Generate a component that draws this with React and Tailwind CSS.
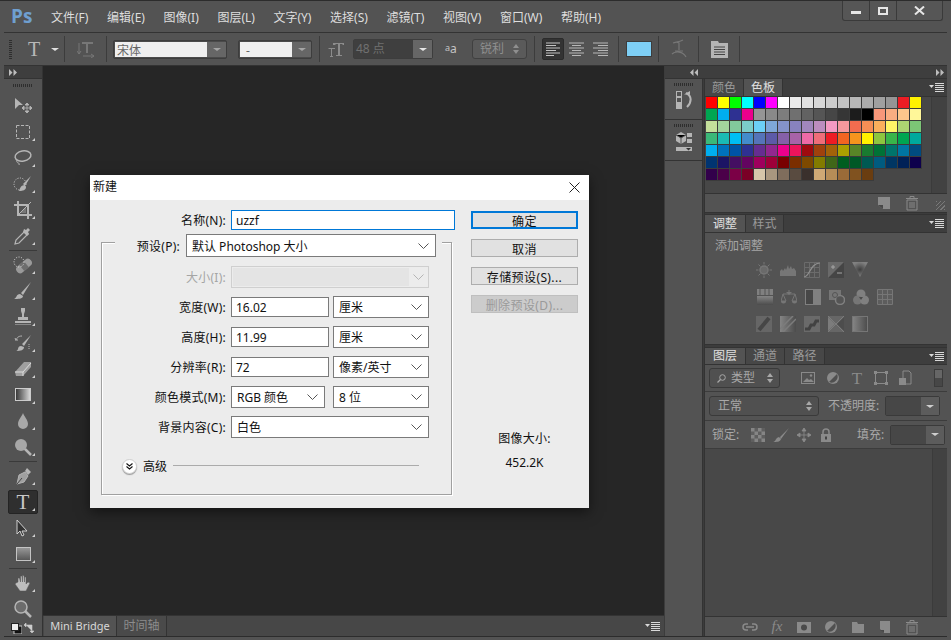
import React from "react";

const F = "font-['Noto_Sans','Noto_Sans_CJK_SC',sans-serif]";

const Ic = ({ s = 20, c = "", children, vb }) => (
  <svg width={s} height={s} viewBox={vb || `0 0 ${s} ${s}`} className={"shrink-0 " + c} fill="none">{children}</svg>
);

const ToolBtn = ({ children, active, corner = true, h = "h-[26px]" }) => (
  <div className={`relative ${h} flex items-center justify-center`}>
    {active && <div className="absolute left-[4px] right-[4px] top-[1px] bottom-[1px] bg-[#2f2f2f] border border-[#242424] rounded-[2px]" />}
    <div className="relative">{children}</div>
    {corner && <div className="absolute right-[7px] bottom-[4px] w-0 h-0 border-l-[3px] border-l-transparent border-b-[3px] border-b-[#d0d0d0]" />}
  </div>
);
const ToolSep = () => <div className="h-px bg-[#3a3a3a] mx-[5px] my-[1px]" />;

const G = "#b5b5b5";
const tools1 = [
  <Ic key="a"><path d="M2 2v11l4-4 4 0z" fill={G} /><path d="M14 7v10M9 12h10M14 7l-2 2h4zM14 17l-2-2h4zM9 12l2-2v4zM19 12l-2-2v4z" stroke={G} fill={G} strokeWidth=".8" /></Ic>,
  <Ic key="b"><rect x="3.5" y="3.5" width="13" height="13" stroke={G} strokeDasharray="3 1.5" /></Ic>,
  <Ic key="c"><ellipse cx="10" cy="8" rx="8" ry="5" stroke={G} strokeWidth="1.5" transform="rotate(-10 10 8)" /><path d="M4 12c-1 2 1 3 1 3s2 0 1 2" stroke={G} /></Ic>,
  <Ic key="d"><circle cx="7" cy="10" r="6" stroke="#d0d0d0" strokeDasharray="1 1.5" /><path d="M18 2l-8 8 2 2zM6 17c1-2 1-5 5-6l2 2c0 3-3 4-7 4z" fill={G} /></Ic>,
  <Ic key="e"><path d="M5 1v14h14M1 5h14v14" stroke={G} strokeWidth="2" /><path d="M7 13l6-6v6z" fill="#777" /><path d="M5 15L18 2" stroke={G} /></Ic>,
  <Ic key="f"><path d="M2 18l1-4 9-9 3 3-9 9z" stroke={G} strokeWidth="1.2" /><path d="M10 6l4 4 2-2-1-2 2-2-2-2-2 2-2-1z" fill={G} /></Ic>,
];
const tools2 = [
  <Ic key="a"><g transform="rotate(-40 11 11)"><rect x="2" y="7" width="18" height="8" rx="4" fill="#9a9a9a" /><rect x="8" y="7" width="6" height="8" fill="#6d6d6d" /></g><circle cx="6" cy="7" r="5" stroke="#ddd" strokeDasharray="1 1.5" /></Ic>,
  <Ic key="b"><path d="M18 1L8 12l2 2z" fill={G} /><path d="M1 18c3-1 2-5 6-5l3 2c0 3-5 3-9 3z" fill={G} /></Ic>,
  <Ic key="c"><path d="M8 1h4v3l-1 3v3h4v3H5v-3h4V7L8 4z" fill={G} /><rect x="2" y="14" width="16" height="2" fill={G} /><rect x="2" y="17" width="16" height="1" fill="#888" /></Ic>,
  <Ic key="d"><path d="M18 2L9 11l2 2zM3 18c3 0 1-5 5-5l3 1c0 3-3 4-8 4z" fill={G} /><path d="M9 3C5 3 4 5 3 7l-1-2M2 7l3 0" stroke={G} /><path d="M16 11v6" stroke={G} strokeDasharray="1 1" /></Ic>,
  <Ic key="e"><path d="M2 13L11 3h7v5l-8 9H3z" fill="#9f9f9f" /><path d="M2 13h8v4M10 13l8-9" stroke="#dcdcdc" /></Ic>,
  <Ic key="f"><defs><linearGradient id="gr"><stop stopColor="#333" /><stop offset="1" stopColor="#ddd" /></linearGradient></defs><rect x="2.5" y="3.5" width="15" height="12" fill="url(#gr)" stroke="#ccc" /></Ic>,
  <Ic key="g"><path d="M10 2c1 3 5 7 5 11a5 5 0 0 1-10 0c0-4 4-8 5-11z" fill="#a8a8a8" /></Ic>,
  <Ic key="h"><circle cx="8" cy="8" r="6" fill="#a8a8a8" /><path d="M12 12l6 6" stroke={G} strokeWidth="2.5" /></Ic>,
];
const tools3 = [
  <Ic key="a"><path d="M4 18l2-9 6-3 3 4-4 6z" fill="#a0a0a0" stroke={G} /><path d="M12 5l2-3 4 4-3 3z" fill={G} /><path d="M4 18l5-6" stroke="#444" /></Ic>,
];
const tools4 = [
  <Ic key="a"><path d="M4 2v14l3-3 2 5 2-1-2-4h5z" fill="#333" stroke="#cfcfcf" /></Ic>,
  <Ic key="b"><defs><linearGradient id="gs" x2="0" y2="1"><stop stopColor="#999" /><stop offset="1" stopColor="#555" /></linearGradient></defs><rect x="3.5" y="3.5" width="14" height="13" fill="url(#gs)" stroke="#c4c4c4" /></Ic>,
];
const tools5 = [
  <Ic key="a"><path d="M5 9V5h1.5l1 4V3h1.5l.5 6V2.5H11l.5 6.5V4H13v7l2-2 2 1-4 8H7L2 11l1-1z" fill="#bdbdbd" stroke="#555" strokeWidth=".5" /></Ic>,
  <Ic key="b"><circle cx="8" cy="8" r="6" fill="#6c6c6c" stroke={G} strokeWidth="1.5" /><path d="M12 12l6 6" stroke={G} strokeWidth="2.5" /></Ic>,
];

const Sep = () => <div className="w-px h-[26px] bg-[#3c3c3c] shrink-0" />;
const Caret = ({ c = "border-t-[#d0d0d0]" }) => <div className={`w-0 h-0 border-x-[4px] border-x-transparent border-t-[3px] ${c}`} />;
const Menu = () => (
  <svg width="15" height="9" viewBox="0 0 15 9" className="shrink-0">
    <path d="M0 2h5L2.500 5z" fill="#d8d8d8" />
    <path d="M6 .5h9M6 2.500h9M6 4.500h9M6 6.500h9M6 8.500h9" stroke="#d8d8d8" />
  </svg>
);
const Collapse = ({ dir = "r" }) => (
  <svg width="8" height="7" viewBox="0 0 8 7">
    {dir === "r" ? <path d="M0 0l3.500 3.500L0 7zM4.500 0L8 3.500 4.500 7z" fill="#bdbdbd" /> : <path d="M3.500 0L0 3.500 3.500 7zM8 0L4.500 3.500 8 7z" fill="#bdbdbd" />}
  </svg>
);
const Grip = ({ w = "w-[20px]" }) => <div className={`${w} h-[3px] bg-[repeating-linear-gradient(90deg,#2e2e2e_0_1px,transparent_1px_2px)]`} />;

const DlgSel = ({ w, children, h = "h-[22px]" }) => (
  <div className={`${w} ${h} shrink-0 bg-white border border-[#7a7a7a] flex items-center pl-[5px] pr-[6px] justify-between text-[#111]`}>
    <span className="whitespace-pre pt-[2px]">{children}</span>
    <svg width="11" height="6" viewBox="0 0 11 6"><path d="M.5.5l5 5 5-5" stroke="#555" fill="none" /></svg>
  </div>
);
const DlgInput = ({ w, children }) => (
  <div className={`${w} h-[20px] shrink-0 bg-white border border-[#7a7a7a] flex items-center pl-[4px] pt-[2px] text-[#111]`}>{children}</div>
);
const Row = ({ label, children, dim }) => (
  <div className="flex items-center h-[22px] mt-[8px]">
    <div className={`w-[124px] pt-[2px] text-right tracking-[0.25px] ${dim ? "text-[#a5a5a5]" : "text-[#111]"}`}>{label}</div>
    <div className="flex ml-[5px] items-center">{children}</div>
  </div>
);
const DlgBtn = ({ children, cls = "border border-[#adadad] bg-[#e1e1e1] text-[#111]" }) => (
  <div className={`h-[18px] flex items-center justify-center leading-none pt-[3px] tracking-[0.4px] ${cls}`}>{children}</div>
);

const sw = [
  ["ff0000","ffff00","00ff00","00ffff","0000ff","ff00ff","ffffff","ebebeb","e1e1e1","d7d7d7","cccccc","c2c2c2","b7b7b7","acacac","a0a0a0","959595","ed1c24","fff200"],
  ["00a651","00aeef","2e3192","ec008c","959595","898989","7d7d7d","707070","626262","555555","464646","363636","1c1c1c","000000","f7977a","f9ad81","fdc68c","fff799"],
  ["c4df9b","a3d39c","82ca9c","7bcdc9","6ccff6","7ea7d8","8493ca","8882be","a187be","bc8dbf","f49ac2","f6989d","f26c4f","f68e55","fbaf5c","fff467","acd372","7cc576"],
  ["3bb878","1abbb4","00bff3","438ccb","5574b9","5c5aa8","8560a8","a863a8","ee6aa7","ef6d79","ed1c24","f26522","f7941d","fff200","8dc63f","39b54a","00a651","00a99d"],
  ["00aeef","0072bc","0054a6","2e3192","662d91","92278f","ec008c","ed145b","9e0b0f","a0410d","a36209","aba000","598527","197b30","007236","00746b","0076a3","004b80"],
  ["003471","1b1464","440e62","630460","9e005d","9e0039","790000","7b2e00","7d4900","827b00","406618","005e20","005826","005952","005b7f","003663","002157","0d004c"],
  ["32004b","4b0049","7b0046","7a0026","d6c6aa","a9977f","7f6d5c","594b40","3a302c","cfa975","b68d57","9a6b38","80521f","6a3d10"],
];

const A = "#767676";
const grad = (id, dir) => (
  <defs><linearGradient id={id} x2={dir ? "0" : "1"} y2={dir ? "1" : "0"}><stop stopColor="#858585" /><stop offset="1" stopColor="#4c4c4c" /></linearGradient></defs>
);
const adjRows = [
  [
    <><circle cx="8" cy="8" r="4" stroke={A} strokeWidth="1.500" fill="#6a6a6a" /><path d="M8 0v2.500M8 13.500V16M0 8h2.500M13.500 8H16M2.500 2.500l2 2M11.500 11.500l2 2M2.500 13.500l2-2M11.500 4.500l2-2" stroke={A} /></>,
    <path d="M0 14V9l2-2 1 2 2-3 1 2 2-5 1 4 2-3 1 3 2-1 2 3v5z" fill={A} />,
    <><path d="M.5.5h15v15H.5zM5.500.5v15M10.500.5v15M.5 5.500h15M.5 10.500h15" stroke="#6b6b6b" /><path d="M0 15c6 0 6-14 16-14" stroke="#8f8f8f" strokeWidth="1.200" /></>,
    <><rect width="16" height="16" fill="#6a6a6a" /><path d="M0 16L16 0v16z" fill="#454545" /><path d="M3 5h4M5 3v4M9 11h5" stroke="#a5a5a5" /></>,
    <><defs><radialGradient id="tri"><stop stopColor="#3f3f3f" /><stop offset="1" stopColor="#808080" /></radialGradient></defs><path d="M0 0h16L8 15z" fill="url(#tri)" /></>,
  ],
  [
    <>{grad("a1", 1)}<rect width="16" height="6" fill="#808080" /><path d="M3 0v6M8 0v6M12 0v6" stroke="#555" /><rect y="7" width="16" height="9" fill="url(#a1)" /></>,
    <><path d="M8 1v3M2 5h12M2 5L0 12h5zM14 5l-3 7h5z" stroke={A} /><path d="M0 12a2.500 2.500 0 0 0 5 0zM11 12a2.500 2.500 0 0 0 5 0zM5 3h6L8 6z" fill={A} /></>,
    <><rect x=".5" y=".5" width="15" height="15" fill="#808080" stroke="#808080" /><rect x="1" y="1" width="7" height="14" fill="#474747" /></>,
    <><rect y="1" width="12" height="10" fill={A} /><circle cx="11" cy="11" r="4.500" stroke="#808080" strokeWidth="1.500" fill="#555" /><circle cx="6" cy="6" r="2.500" stroke="#555" /></>,
    <><circle cx="8" cy="5" r="4.500" fill="#808080" /><circle cx="4.500" cy="11" r="4.500" fill={A} /><circle cx="11.500" cy="11" r="4.500" fill="#808080" /><path d="M6 8h4l-2 3z" fill="#4b4b4b" /></>,
    <path d="M.5.5h15v15H.5zM5.500.5v15M10.500.5v15M.5 5.500h15M.5 10.500h15" stroke={A} fill="#5d5d5d" />,
  ],
  [
    <><rect width="16" height="16" fill="#666" /><path d="M3 14L13 2" stroke="#464646" strokeWidth="4" /></>,
    <>{grad("a2")}<rect width="16" height="16" fill="url(#a2)" /><path d="M0 13L13 0M3 16L16 3" stroke="#7c7c7c" strokeWidth="1.500" /></>,
    <><rect width="16" height="16" fill="#6a6a6a" /><path d="M1 13h4l2-4h3l2-4h3" stroke="#424242" strokeWidth="3" /></>,
    <><rect width="16" height="16" fill="#666" /><path d="M0 0l8 8 8-8M0 16l8-8 8 8" stroke="#7c7c7c" /><path d="M0 1l7 7-7 7z" fill="#7c7c7c" /><path d="M16 1L9 8l7 7z" fill="#4d4d4d" /></>,
    <>{grad("a3")}<rect x=".5" y=".5" width="15" height="15" fill="url(#a3)" stroke={A} /></>,
  ],
];

const DkSel = ({ w, children }) => (
  <div className={`${w} h-[20px] rounded-[3px] bg-[#505050] border border-[#3a3a3a] flex items-center justify-between px-[6px] text-[#a8a8a8] shrink-0`}>
    {children}
    <svg width="6" height="10" viewBox="0 0 6 10"><path d="M0 4l3-4 3 4zM0 6l3 4 3-4z" fill="#a8a8a8" /></svg>
  </div>
);
const DkNum = () => (
  <div className="w-[55px] h-[20px] flex border border-[#3a3a3a] rounded-[2px] shrink-0">
    <div className="w-[35px] bg-[#474747]" />
    <div className="flex-1 bg-[#5c5c5c] flex items-center justify-center"><Caret c="border-t-[#cfcfcf]" /></div>
  </div>
);
const B = "#8a8a8a";

const foot = [
  <Ic key="1" s={16}><path d="M6 5H4a3 3 0 0 0 0 6h2M10 5h2a3 3 0 0 1 0 6h-2M4 8h8" stroke={B} strokeWidth="1.500" /></Ic>,
  <span key="2" className="w-[16px] text-center italic font-['Liberation_Serif',serif] text-[15px] leading-none text-[#8a8a8a]">fx</span>,
  <Ic key="3" s={16}><rect x="1" y="3" width="14" height="11" fill={B} /><circle cx="8" cy="8.500" r="3" fill="#4a4a4a" /></Ic>,
  <Ic key="4" s={16}><circle cx="8" cy="8" r="6" fill={B} /><path d="M12 4L4 12a6 6 0 0 0 8-8z" fill="#505050" /></Ic>,
  <Ic key="5" s={16}><path d="M2 3h5l1 2h6v9H2z" fill={B} /></Ic>,
  <Ic key="6" s={16}><path d="M3 2h10v12H7l-4-4z" fill={B} /><path d="M3 11h4v3" fill="#484848" /></Ic>,
  <Ic key="7" s={16}><path d="M3 5h10v10H3zM2 3.500h12M6 3V1.500h4V3M6 7v6M8 7v6M10 7v6" stroke={B} /></Ic>,
];

export default function App() {
  return (
    <div className={`relative w-[951px] h-[640px] overflow-hidden bg-[#535353] text-[12px] leading-[16px] ${F} flex flex-col`}>
      {/* Title bar */}
      <div className="h-[32px] shrink-0 flex items-center relative border-t border-[#2c2c2c]">
        <span className="ml-[11px] w-[40px] text-[#6f9fd0] text-[19px] font-bold leading-none font-['Open_Sans',sans-serif]">Ps</span>
        <div className="flex gap-[18.6px] text-[#dedede] text-[12px] mt-[2px]">
          {["文件(F)", "编辑(E)", "图像(I)", "图层(L)", "文字(Y)", "选择(S)", "滤镜(T)", "视图(V)", "窗口(W)", "帮助(H)"].map((m) => (
            <span key={m} className="whitespace-nowrap">{m}</span>
          ))}
        </div>
        <div className="absolute right-[8px] top-0 h-[20px] w-[101px] flex border border-t-0 border-[#3a3a3a] rounded-b-[3px] bg-[#565656]">
          <div className="w-[27px] border-r border-[#3a3a3a] flex items-center justify-center pt-[4px]"><div className="w-[10px] h-[3px] bg-[#e6e6e6]" /></div>
          <div className="w-[27px] border-r border-[#3a3a3a] flex items-center justify-center"><div className="w-[10px] h-[8px] border-2 border-[#e6e6e6]" /></div>
          <div className="flex-1 flex items-center justify-center">
            <svg width="11" height="9" viewBox="0 0 11 9"><path d="M1 .5l9 8M10 .5l-9 8" stroke="#e6e6e6" strokeWidth="2" /></svg>
          </div>
        </div>
      </div>

      {/* Options bar */}
      <div className="h-[34px] shrink-0 mx-[4px] border-t border-b border-[#333] bg-[#535353] flex items-center text-[#a8a8a8] relative">
        <div className="ml-[5px] w-[3px] h-[20px] bg-[repeating-linear-gradient(0deg,#2e2e2e_0_1px,transparent_1px_2px)]" />
        <span className="ml-[16px] w-[15px] text-[20px] leading-none font-['Liberation_Serif',serif] text-[#b8b8b8]">T</span>
        <div className="ml-[8px]"><Caret c="border-t-[#e0e0e0]" /></div>
        <div className="ml-[5px]"><Sep /></div>
        <div className="ml-[12px] w-[18px]">
          <Ic s={18}><path d="M5 2h11v2H11v9H9V4H5z" fill="#777" /><path d="M2 3v11M0 11l2 3 2-3M6 16h11M14 14l3 2-3 2" stroke="#777" /></Ic>
        </div>
        <div className="ml-[11px]"><Sep /></div>
        <div className="ml-[6px] w-[114px] h-[19px] flex bg-[#4a4a4a] border border-[#3d3d3d] rounded-[2px] p-[1px] pr-0">
          <div className="w-[92px] bg-[#efefef] text-[#666] pl-[2px] leading-[17px]">宋体</div>
          <div className="flex-1 bg-[#666] flex items-center justify-center"><Caret c="border-t-[#a5a5a5]" /></div>
        </div>
        <div className="ml-[11px] w-[74px] h-[19px] flex bg-[#4a4a4a] border border-[#3d3d3d] rounded-[2px] p-[1px] pr-0">
          <div className="w-[52px] bg-[#efefef] text-[#666] pl-[6px] leading-[17px]">-</div>
          <div className="flex-1 bg-[#666] flex items-center justify-center"><Caret c="border-t-[#a5a5a5]" /></div>
        </div>
        <div className="ml-[7px]"><Sep /></div>
        <div className="ml-[7px] w-[18px]">
          <Ic s={18}><path d="M6 3h11v2h-1l-1-1h-2v11h2v1H9v-1h2V4H9L8 5H6z" fill="#8c8c8c" /><path d="M1 8h7v1H5v7h1v1H3v-1h1V9H2z" fill="#8c8c8c" /></Ic>
        </div>
        <div className="ml-[8px] w-[80px] h-[20px] flex border border-[#3d3d3d] rounded-[2px]">
          <div className="w-[59px] bg-[#3f3f3f] text-[#707070] pl-[2px] leading-[18px]">48 点</div>
          <div className="flex-1 bg-[#666] flex items-center justify-center"><Caret c="border-t-[#e6e6e6]" /></div>
        </div>
        <span className="ml-[12px] w-[14px] flex items-end leading-none text-[#c4c4c4]"><span className="text-[9px] -mt-[4px] mb-[3px]">a</span><span className="text-[12px]">a</span></span>
        <div className="ml-[13px] w-[55px] h-[20px] rounded-[3px] bg-[#5a5a5a] border border-[#404040] flex items-center justify-between px-[7px] text-[#8f8f8f]">
          锐利
          <svg width="6" height="10" viewBox="0 0 6 10"><path d="M0 4l3-4 3 4zM0 6l3 4 3-4z" fill="#8f8f8f" /></svg>
        </div>
        <div className="ml-[7px]"><Sep /></div>
        <div className="ml-[7px] w-[22px] h-[22px] bg-[#333] border border-[#2b2b2b] rounded-[2px] flex items-center justify-center">
          <svg width="14" height="14" viewBox="0 0 14 14"><path d="M0 1h14M0 3.500h10M0 6h14M0 8.500h10M0 11h14M0 13.500h8" stroke="#c4c4c4" /></svg>
        </div>
        <div className="ml-[5px]">
          <svg width="15" height="14" viewBox="0 0 15 14"><path d="M0 1h15M3 3.500h9M0 6h15M3 8.500h9M0 11h15M3 13.500h9" stroke="#b8b8b8" /></svg>
        </div>
        <div className="ml-[9px]">
          <svg width="15" height="14" viewBox="0 0 15 14"><path d="M0 1h15M5 3.500h10M0 6h15M5 8.500h10M0 11h15M5 13.500h10" stroke="#b8b8b8" /></svg>
        </div>
        <div className="ml-[10px]"><Sep /></div>
        <div className="ml-[7px] w-[26px] h-[16px] bg-[#7ecff5] border border-[#3d3d3d]" />
        <div className="ml-[6px]"><Sep /></div>
        <div className="ml-[12px]">
          <svg width="16" height="20" viewBox="0 0 16 20"><path d="M2 4c3-1 6-1 10-3M5 3l3 1v7M1 15c3-3 11-3 14 3M4 12h8" stroke="#777" strokeWidth="1.200" fill="none" /></svg>
        </div>
        <div className="ml-[11px]"><Sep /></div>
        <div className="ml-[12px]">
          <svg width="17" height="17" viewBox="0 0 17 17"><path d="M0 0h7l1 2h9v15H0z" fill="#b5b5b5" /><path d="M3 6h11M3 8.500h11M3 11h11M3 13.500h11" stroke="#444" /></svg>
        </div>
        <div className="ml-[11px]"><Sep /></div>
      </div>

      {/* Main */}
      <div className="flex-1 flex mx-[4px] min-h-0 border-b border-[#2c2c2c] bg-[#3c3c3c]">
        {/* Tools */}
        <div className="w-[39px] shrink-0 flex flex-col border-r border-[#333]">
          <div className="h-[13px] shrink-0 bg-[#3e3e3e] border-b border-[#333] pl-[5px] flex items-center"><Collapse /></div>
          <div className="flex-1 bg-[#535353] flex flex-col">
            <div className="h-[11px] flex items-center justify-center mt-px"><Grip /></div>
            <div className="mt-[2px]">
              <ToolBtn corner={false}>{tools1[0]}</ToolBtn>
              {tools1.slice(1).map((t, i) => <ToolBtn key={i}>{t}</ToolBtn>)}
            </div>
            <ToolSep />
            {tools2.map((t, i) => <ToolBtn key={i}>{t}</ToolBtn>)}
            <ToolSep />
            {tools3.map((t, i) => <ToolBtn key={i}>{t}</ToolBtn>)}
            <ToolBtn active><span className="text-[21px] leading-none font-['Liberation_Serif',serif] text-[#c8c8c8]">T</span></ToolBtn>
            {tools4.map((t, i) => <ToolBtn key={i}>{t}</ToolBtn>)}
            <ToolSep />
            <ToolBtn>{tools5[0]}</ToolBtn>
            <ToolBtn corner={false}>{tools5[1]}</ToolBtn>
            <div className="flex justify-between items-center px-[7px] -mt-px h-[14px]">
              <svg width="11" height="11" viewBox="0 0 11 11"><rect x="3" y="3" width="8" height="8" fill="#111" stroke="#ccc" /><rect x=".5" y=".5" width="7" height="7" fill="#eee" stroke="#222" /></svg>
              <svg width="11" height="11" viewBox="0 0 11 11"><path d="M2 2h6v6M0 2l2-2v4zM8 10L6 8h4z" stroke="#ccc" fill="#ccc" strokeWidth=".6" /></svg>
            </div>
          </div>
        </div>

        {/* Canvas */}
        <div className="w-[621px] shrink-0 flex flex-col">
          <div className="flex-1 bg-[#262626]" />
          <div className="h-[21px] shrink-0 bg-[#474747] border-t border-[#333] flex items-end pl-px">
            <div className="w-[73px] h-full bg-[#535353] text-[#d8d8d8] text-[11px] flex items-center justify-center border-r border-[#333]">Mini Bridge</div>
            <div className="w-[50px] h-full bg-[#4a4a4a] text-[#8c8c8c] flex items-center justify-center border-r border-[#333]">时间轴</div>
            <div className="flex-1 h-full flex items-center justify-end pr-[4px]"><Menu /></div>
          </div>
        </div>

        {/* Right area */}
        <div className="flex-1 flex flex-col ml-[1px] min-w-0">
          <div className="h-[13px] shrink-0 bg-[#3e3e3e] border-b border-[#333] flex items-center justify-between px-[25px] pr-[3px]">
            <Collapse dir="l" /><Collapse />
          </div>
          <div className="flex-1 flex min-h-0">
            {/* Dock */}
            <div className="w-[38px] shrink-0 flex flex-col bg-[#535353] border-r border-[#333]">
              <div className="h-[41px] border-b border-[#333] flex flex-col items-center pt-[4px]">
                <Grip />
                <svg className="mt-[5px]" width="16" height="18" viewBox="0 0 16 18"><rect x=".5" y=".5" width="5" height="5" stroke="#b5b5b5" fill="none" /><rect x=".5" y="6.500" width="5" height="5" stroke="#b5b5b5" fill="none" /><rect x="0" y="12" width="6" height="6" fill="#b5b5b5" /><path d="M10 2c6 3 6 9 1 14" stroke="#b5b5b5" strokeWidth="2" fill="none" /><path d="M8 3.500h6V0z" fill="#b5b5b5" /></svg>
              </div>
              <div className="h-[41px] border-b border-[#333] flex flex-col items-center pt-[4px]">
                <Grip />
                <svg className="mt-[5px]" width="16" height="20" viewBox="0 0 16 20"><path d="M0 3l5-3 5 3v6l-5 3-5-3z" fill="#b5b5b5" /><path d="M0 3l5 3 5-3M5 6v6" stroke="#555" /><rect x="11" y="1" width="5" height="4" fill="#b5b5b5" /><rect x="11" y="7" width="5" height="4" fill="#b5b5b5" /><rect y="15" width="16" height="4" fill="#b5b5b5" /><path d="M10 16h5l-2.500 2.500z" fill="#333" /></svg>
              </div>
            </div>

            {/* Panels */}
            <div className="flex-1 ml-px flex flex-col min-w-0 border-l border-[#333]">
              {/* Swatches */}
              <div className="h-[134px] shrink-0 flex flex-col bg-[#535353] border-b border-[#333]">
                <div className="h-[18px] bg-[#3e3e3e] border-b border-[#333] flex shrink-0 pr-[3px]">
                  <div className="w-[39px] flex items-center justify-center bg-[#474747] text-[#999] border-r border-[#333]">颜色</div>
                  <div className="w-[39px] flex items-center justify-center bg-[#535353] text-[#e0e0e0] border-r border-[#333]">色板</div>
                  <div className="flex-1 flex justify-end items-center"><Menu /></div>
                </div>
                <div className="flex-1 flex bg-[#474747] border-b border-[#333] min-h-0">
                  <div className="flex-1 pl-px">
                    <div className="grid grid-cols-[repeat(18,12px)]">
                      {sw.flat().map((c, i) => (
                        <div key={i} className="w-[12px] h-[12px] border-r border-b border-[#3b3b3b]" style={{ backgroundColor: "#" + c }} />
                      ))}
                    </div>
                  </div>
                  <div className="w-[16px] bg-[#424242] border-l border-[#3b3b3b]" />
                </div>
                <div className="h-[18px] shrink-0 flex items-center justify-end pr-[27px] gap-[12px] relative">
                  <Ic s={16}><path d="M2 2h12v12H7l-5-4z" fill="#8a8a8a" /><path d="M2 10h5v4" fill="#484848" /></Ic>
                  <Ic s={16}><path d="M3 5h10v10H3zM2 3.500h12M6 3V1.500h4V3M6 7v6M8 7v6M10 7v6" stroke="#8a8a8a" /></Ic>
                  <div className="absolute right-[2px] bottom-[2px] w-[9px] h-[9px] bg-[repeating-linear-gradient(135deg,#7a7a7a_0_1px,transparent_1px_3px)]" />
                </div>
              </div>
              <div className="h-[1px] shrink-0" />
              {/* Adjustments */}
              <div className="h-[131px] shrink-0 flex flex-col bg-[#535353] border-y border-[#333]">
                <div className="h-[18px] bg-[#3e3e3e] border-b border-[#333] flex shrink-0 pr-[3px]">
                  <div className="w-[41px] flex items-center justify-center bg-[#535353] text-[#e0e0e0] border-r border-[#333]">调整</div>
                  <div className="w-[38px] flex items-center justify-center bg-[#474747] text-[#999] border-r border-[#333]">样式</div>
                  <div className="flex-1 flex justify-end items-center"><Menu /></div>
                </div>
                <div className="pl-[10px] pt-[5px] text-[#a5a5a5] h-[26px]">添加调整</div>
                <div className="flex flex-col gap-[11px] mt-[3px] pr-[2px]">
                  {adjRows.map((r, i) => (
                    <div key={i} className={`flex justify-center gap-[8px] ${i === 1 ? "" : "pr-[26px]"}`}>
                      {r.map((d, j) => <Ic key={j} s={16}>{d}</Ic>)}
                    </div>
                  ))}
                </div>
              </div>
              <div className="h-[2px] shrink-0" />
              {/* Layers */}
              <div className="flex-1 min-h-0 flex flex-col bg-[#535353] border-t border-[#333]">
                <div className="h-[17px] bg-[#3e3e3e] border-b border-[#333] flex shrink-0 pr-[3px]">
                  <div className="w-[41px] flex items-center justify-center bg-[#535353] text-[#e0e0e0] border-r border-[#333]">图层</div>
                  <div className="w-[39px] flex items-center justify-center bg-[#474747] text-[#999] border-r border-[#333]">通道</div>
                  <div className="w-[40px] flex items-center justify-center bg-[#474747] text-[#999] border-r border-[#333]">路径</div>
                  <div className="flex-1 flex justify-end items-center"><Menu /></div>
                </div>
                <div className="h-[27px] shrink-0 flex items-center border-b border-[#3c3c3c] pl-[4px]">
                  <div className="w-[71px] h-[20px] rounded-[3px] bg-[#505050] border border-[#3a3a3a] flex items-center justify-between pl-[7px] pr-[6px] text-[#a8a8a8]">
                    <span className="flex items-center gap-[5px]">
                      <svg width="9" height="9" viewBox="0 0 9 9"><circle cx="5.500" cy="3.500" r="2.800" stroke="#a8a8a8" fill="none" /><path d="M3.500 5.500L.5 8.500" stroke="#a8a8a8" strokeWidth="1.300" /></svg>
                      类型
                    </span>
                    <svg width="6" height="10" viewBox="0 0 6 10"><path d="M0 4l3-4 3 4zM0 6l3 4 3-4z" fill="#a8a8a8" /></svg>
                  </div>
                  <div className="flex items-center gap-[8px] ml-[21px]">
                    <Ic s={16}><rect x=".5" y="2.500" width="13" height="11" stroke={B} /><path d="M2 12l4-4 2 2 2-1 3 3z" fill={B} /><circle cx="10" cy="5.500" r="1.200" fill={B} /></Ic>
                    <Ic s={16}><circle cx="8" cy="8" r="6" fill={B} /><path d="M12 4L4 12a6 6 0 0 0 8-8z" fill="#505050" /></Ic>
                    <span className="w-[16px] text-center text-[17px] leading-none font-['Liberation_Serif',serif] text-[#8a8a8a]">T</span>
                    <Ic s={16}><rect x="2.500" y="2.500" width="11" height="11" stroke={B} /><path d="M1 1h3v3H1zM12 1h3v3h-3zM1 12h3v3H1zM12 12h3v3h-3z" fill={B} /></Ic>
                    <Ic s={16}><path d="M6 1h6l2 2v11H6z" stroke={B} /><rect x="2" y="8" width="7" height="7" fill={B} /></Ic>
                  </div>
                  <div className="ml-auto mr-[4px] w-[9px] h-[18px] border border-[#3c3c3c] bg-[#474747]"><div className="h-[8px] bg-[#666]" /></div>
                </div>
                <div className="h-[29px] shrink-0 flex items-center border-b border-[#3c3c3c] pl-[4px]">
                  <DkSel w="w-[110px]"><span className="ml-[2px]">正常</span></DkSel>
                  <span className="ml-[9px] w-[57px] text-[#a8a8a8] whitespace-nowrap">不透明度:</span>
                  <DkNum />
                </div>
                <div className="h-[28px] shrink-0 flex items-center border-b border-[#3c3c3c] pl-[7px]">
                  <span className="w-[34px] text-[#a8a8a8]">锁定:</span>
                  <div className="flex items-center gap-[8px] ml-[5px]">
                    <svg width="14" height="14" viewBox="0 0 14 14"><rect width="14" height="14" fill="#5f5f5f" /><path d="M0 0h3.500v3.500H0zM7 0h3.500v3.500H7zM3.500 3.500H7V7H3.500zM10.500 3.500H14V7h-3.500zM0 7h3.500v3.500H0zM7 7h3.500v3.500H7zM3.500 10.500H7V14H3.500zM10.500 10.500H14V14h-3.500z" fill="#858585" /></svg>
                    <Ic s={16}><path d="M16 1L7 10l1 2zM0 15c3 0 2-4 6-5l2 2c-1 3-4 3-8 3z" fill={B} /></Ic>
                    <Ic s={14}><path d="M7 0v14M0 7h14M7 0L5 3h4zM7 14l-2-3h4zM0 7l3-2v4zM14 7l-3-2v4z" stroke={B} strokeWidth=".8" fill={B} /></Ic>
                    <Ic s={14}><path d="M4 7V4a3 3 0 0 1 6 0v3" stroke={B} strokeWidth="1.500" /><rect x="2" y="6" width="10" height="8" fill={B} /><rect x="6" y="8.500" width="2" height="3" fill="#444" /></Ic>
                  </div>
                  <span className="ml-[24px] w-[33px] text-[#a8a8a8]">填充:</span>
                  <DkNum />
                </div>
                <div className="flex-1 min-h-0 flex bg-[#484848] border-b border-[#333]">
                  <div className="flex-1" />
                  <div className="w-[15px] bg-[#424242] border-l border-[#3b3b3b]" />
                </div>
                <div className="h-[19px] shrink-0 flex items-center pl-[37px] gap-[11px]">{foot}</div>
              </div>
            </div>
          </div>
        </div>
      </div>
      <div className="h-[3px] shrink-0 bg-[#535353]" />

      {/* Dialog */}
      <div className={`absolute left-[90px] top-[175px] w-[499px] h-[333px] flex flex-col bg-[#ececec] shadow-[0_4px_12px_rgba(0,0,0,0.5)] text-[#111]`}>
        <div className="h-[25px] shrink-0 bg-white flex items-center justify-between pl-[3px] pr-[9px]">
          <span className="-mt-[2px]">新建</span>
          <svg width="11" height="11" viewBox="0 0 11 11"><path d="M.5.5l10 10M10.500.5l-10 10" stroke="#222" /></svg>
        </div>
        <div className="flex px-[11px]">
          <div className="w-[354px] shrink-0 pt-[10px]">
            <div className="flex items-center h-[20px]">
              <div className="w-[125px] pt-[2px] text-right tracking-[0.25px]">名称(N):</div>
              <div className="ml-[5px] w-[224px] h-[20px] bg-white border border-[#0078d7] flex items-center pl-[4px] pt-[2px]">uzzf</div>
            </div>
            <div className="relative z-10 mt-[4px] ml-[14px] w-[327px] h-[23px] bg-[#ececec] flex items-center">
              <div className="w-[66px] pr-px pt-[2px] text-right shrink-0 whitespace-nowrap tracking-[0.25px]">预设(P):</div>
              <div className="ml-[5px]"><DlgSel w="w-[250px]" h="h-[23px]">默认 Photoshop 大小</DlgSel></div>
            </div>
            <div className="w-[351px] h-[253px] -mt-[15px] border border-[#a0a0a0] shadow-[inset_1px_1px_0_#fff,1px_1px_0_#fff] pt-[15px]">
              <Row label="大小(I):" dim>
                <div className="w-[198px] h-[22px] border border-[#cfcfcf] flex bg-[#ececec] p-px">
                  <div className="w-[176px] h-full bg-[#e4e4e4]" />
                  <div className="flex-1 flex items-center justify-center">
                    <svg width="11" height="6" viewBox="0 0 11 6"><path d="M.5.5l5 5 5-5" stroke="#b5b5b5" fill="none" /></svg>
                  </div>
                </div>
              </Row>
              <Row label="宽度(W):"><DlgInput w="w-[98px]">16.02</DlgInput><div className="ml-[4px]"><DlgSel w="w-[96px]">厘米</DlgSel></div></Row>
              <Row label="高度(H):"><DlgInput w="w-[98px]">11.99</DlgInput><div className="ml-[4px]"><DlgSel w="w-[96px]">厘米</DlgSel></div></Row>
              <Row label="分辨率(R):"><DlgInput w="w-[98px]">72</DlgInput><div className="ml-[4px]"><DlgSel w="w-[96px]">像素/英寸</DlgSel></div></Row>
              <Row label="颜色模式(M):"><DlgSel w="w-[94px]">RGB 颜色</DlgSel><div className="ml-[8px]"><DlgSel w="w-[96px]">8 位</DlgSel></div></Row>
              <Row label="背景内容(C):"><DlgSel w="w-[198px]">白色</DlgSel></Row>
              <div className="flex items-center h-[16px] mt-[20px] pl-[20px]">
                <div className="w-[15px] h-[15px] rounded-full bg-white border border-[#d0d0d0] shadow-[0_1px_1px_#999] flex items-center justify-center">
                  <svg width="7" height="7" viewBox="0 0 7 7"><path d="M.5.5L3.500 3l3-2.500M.5 3.500L3.500 6l3-2.500" stroke="#111" fill="none" strokeWidth="1.100" /></svg>
                </div>
                <span className="ml-[6px] w-[25px] pt-[2px]">高级</span>
                <div className="ml-[5px] w-[246px] h-px bg-[#ababab] -mt-[1px]" />
              </div>
            </div>
          </div>
          <div className="ml-[16px] w-[107px] shrink-0 pt-[11px] flex flex-col">
            <DlgBtn cls="border-2 border-[#0078d7] bg-[#e1e1e1] text-[#111]">确定</DlgBtn>
            <div className="mt-[10px]"><DlgBtn>取消</DlgBtn></div>
            <div className="mt-[10px]"><DlgBtn>存储预设(S)...</DlgBtn></div>
            <div className="mt-[10px]"><DlgBtn cls="border border-[#bfbfbf] bg-[#cccccc] text-[#9a9a9a]">删除预设(D)...</DlgBtn></div>
            <div className="mt-[119px] text-center leading-[14px] tracking-[0.25px]">图像大小:</div>
            <div className="mt-[10px] text-center leading-[14px]">452.2K</div>
          </div>
        </div>
      </div>
    </div>
  );
}
